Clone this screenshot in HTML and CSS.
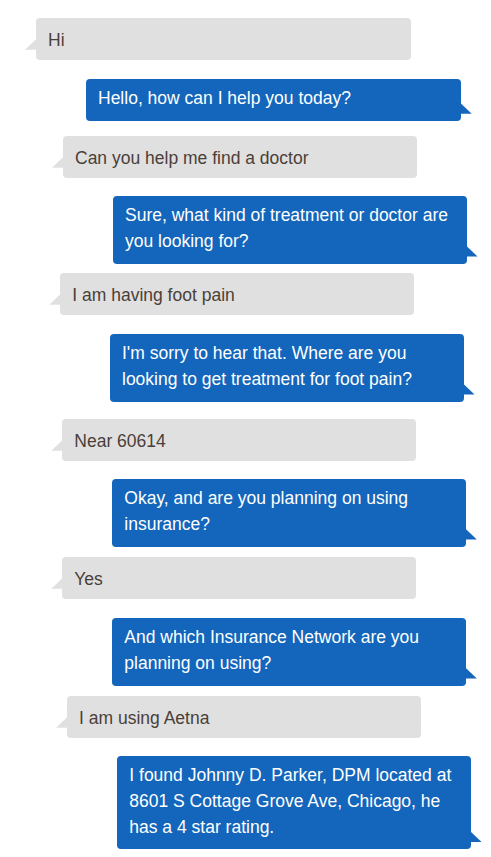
FILE: index.html
```html
<!DOCTYPE html>
<html lang="en">
<head>
<meta charset="utf-8">
<title>Chat</title>
<link rel="stylesheet" href="styles.css">
</head>
<body>
<div class="chat">
  <div class="msg user">Hi</div>
  <div class="msg bot">Hello, how can I help you today?</div>
  <div class="msg user">Can you help me find a doctor</div>
  <div class="msg bot">Sure, what kind of treatment or doctor are you looking for?</div>
  <div class="msg user">I am having foot pain</div>
  <div class="msg bot">I'm sorry to hear that. Where are you looking to get treatment for foot pain?</div>
  <div class="msg user">Near 60614</div>
  <div class="msg bot">Okay, and are you planning on using insurance?</div>
  <div class="msg user">Yes</div>
  <div class="msg bot">And which Insurance Network are you planning on using?</div>
  <div class="msg user">I am using Aetna</div>
  <div class="msg bot">I found Johnny D. Parker, DPM located at 8601 S Cottage Grove Ave, Chicago, he has a 4 star rating.</div>
</div>
</body>
</html>
```

FILE: styles.css
```css
html, body {
  margin: 0;
  padding: 0;
  background: #ffffff;
}

body {
  font-family: "Liberation Sans", Arial, sans-serif;
  font-size: 17.5px;
  line-height: 25.75px;
}

.chat {
  display: flex;
  flex-direction: column;
  align-items: flex-start;
}

.msg {
  position: relative;
  box-sizing: border-box;
  width: 353.5px;
  border-radius: 4px;
}

.msg::before {
  content: "";
  position: absolute;
  width: 11px;
  height: 10.5px;
}

.user {
  background: #e0e0e0;
  color: #4a3f38;
  padding: 10px 12px 6px;
}

.user::before {
  left: -11px;
  bottom: 10px;
  background: #e0e0e0;
  clip-path: polygon(100% 0, 100% 100%, 0 100%);
}

.bot {
  background: #1366bb;
  color: #ffffff;
  padding: 7px 12px 9px;
}

.bot::before {
  right: -11px;
  bottom: 7px;
  background: #1366bb;
  clip-path: polygon(0 0, 100% 100%, 0 100%);
}

.msg:nth-child(1)  { margin-top: 18px;    margin-left: 36px;    width: 374.7px; }
.msg:nth-child(2)  { margin-top: 19.25px; margin-left: 86px;    width: 374.7px; }
.msg:nth-child(3)  { margin-top: 15.25px; margin-left: 63px; }
.msg:nth-child(4)  { margin-top: 18.25px; margin-left: 113px; }
.msg:nth-child(5)  { margin-top: 9.5px;   margin-left: 60.3px; }
.msg:nth-child(6)  { margin-top: 19.25px; margin-left: 110px; }
.msg:nth-child(7)  { margin-top: 17.5px;  margin-left: 62.3px; }
.msg:nth-child(8)  { margin-top: 18.25px; margin-left: 112.3px; }
.msg:nth-child(9)  { margin-top: 10.5px;  margin-left: 62.3px; }
.msg:nth-child(10) { margin-top: 19.25px; margin-left: 112.3px; }
.msg:nth-child(11) { margin-top: 10.5px;  margin-left: 67px; }
.msg:nth-child(12) { margin-top: 18.25px; margin-left: 117.3px; }
```
